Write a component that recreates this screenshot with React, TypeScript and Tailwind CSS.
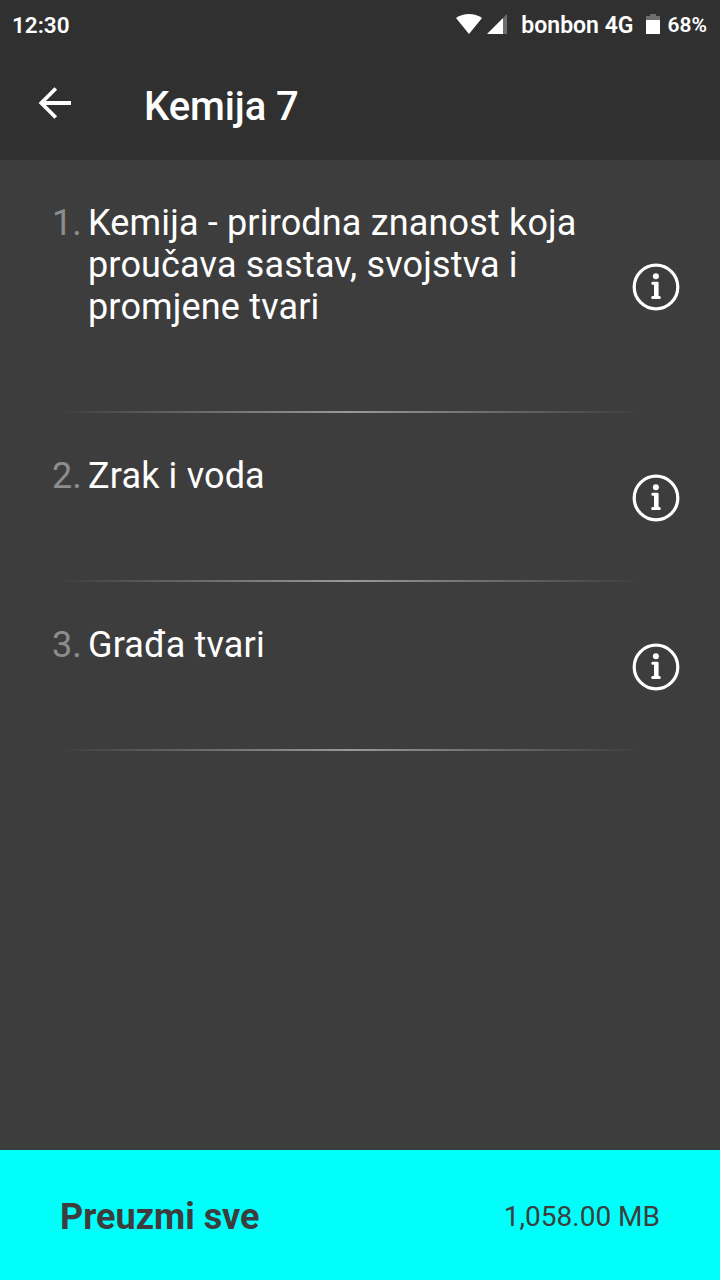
interface Lesson {
  id: number;
  title: string;
}

const lessons: Lesson[] = [
  { id: 1, title: "Kemija - prirodna znanost koja proučava sastav, svojstva i promjene tvari" },
  { id: 2, title: "Zrak i voda" },
  { id: 3, title: "Građa tvari" },
];

function StatusBar() {
  return (
    <div className="flex h-12 items-center justify-between pl-3 pr-[13px] text-[23px] font-semibold leading-none">
      <span className="pt-[3px] text-[22.5px]">12:30</span>
      <div className="flex items-center">
        <svg viewBox="0 0 26 20" className="h-5 w-[26px] fill-current">
          <path d="M0 4C7.500-1.300 18.500-1.300 26 4L13 20Z" />
        </svg>
        <svg viewBox="0 0 20 20" className="ml-[5px] h-5 w-5 fill-current">
          <path d="M20 0V20H16V4Z" opacity="0.300" />
          <path d="M16 4V20H0Z" />
        </svg>
        <span className="ml-[14px] pt-[3px]">bonbon 4G</span>
        <svg viewBox="0 0 14 20" className="ml-3 h-5 w-[14px] fill-current">
          <path d="M4 0H10V2H14V6H0V2H4Z" opacity="0.300" />
          <path d="M0 6H14V20H0Z" />
        </svg>
        <span className="ml-2 pt-[2px] text-[21px]">68%</span>
      </div>
    </div>
  );
}

function InfoIcon() {
  return (
    <svg viewBox="0 0 48 48" className="mt-[2px] size-12 shrink-0">
      <circle cx="24" cy="24" r="21.800" fill="none" stroke="currentColor" strokeWidth="3.200" />
      <circle cx="23.900" cy="13.200" r="3" fill="currentColor" />
      <path
        d="M20.600 18.700H25.400Q26.600 18.700 26.600 19.900V32.900H27.500Q28.800 32.900 28.800 34.400T27.500 35.900H20.500Q19.200 35.900 19.200 34.400T20.500 32.900H22V21.700H20.600Q19.300 21.700 19.300 20.200T20.600 18.700Z"
        fill="currentColor"
      />
    </svg>
  );
}

function LessonRow({ id, title }: Lesson) {
  return (
    <li>
      <div className="flex items-center justify-between pt-[42px] pr-10 pb-[41px] pl-[52px]">
        <div className="flex pb-[42px] text-4xl leading-[42px]">
          <span className="w-9 text-[#8d8d8d]">{id}.</span>
          <span className="w-[510px] tracking-[0.16px]">{title}</span>
        </div>
        <InfoIcon />
      </div>
      <div className="mr-[78px] ml-[58px] h-[2px] bg-linear-to-r from-transparent via-[#999999] to-transparent" />
    </li>
  );
}

export default function App() {
  return (
    <div className="flex h-screen w-full flex-col bg-[#3d3d3d] font-[Roboto,sans-serif] text-white">
      <header className="h-40 bg-[#303030]">
        <StatusBar />
        <div className="flex h-28 items-center pl-[38px]">
          <svg viewBox="0 0 34 34" className="mb-[2px] size-[34px]" fill="none" stroke="currentColor" strokeWidth="3.800">
            <path d="M33 17H3.500M17.800 2.500L3.300 17L17.800 31.500" />
          </svg>
          <h1 className="ml-[72px] pt-[5px] text-[40px] font-medium leading-none tracking-[-0.1px]">Kemija 7</h1>
        </div>
      </header>
      <ul className="flex-1">
        {lessons.map((lesson) => (
          <LessonRow key={lesson.id} {...lesson} />
        ))}
      </ul>
      <button className="flex h-[130px] items-center justify-between bg-[#00fffb] px-[60px] pt-1 text-[#3d3d3d]">
        <span className="text-4xl font-bold">Preuzmi sve</span>
        <span className="text-[28px]">1,058.00 MB</span>
      </button>
    </div>
  );
}
